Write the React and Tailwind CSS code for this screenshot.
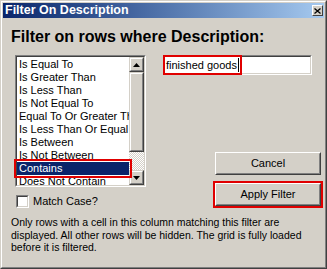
import { useState } from 'react';

const OPTIONS = [
  'Is Equal To',
  'Is Greater Than',
  'Is Less Than',
  'Is Not Equal To',
  'Equal To Or Greater Than',
  'Is Less Than Or Equal To',
  'Is Between',
  'Is Not Between',
  'Contains',
  'Does Not Contain',
];

function Arrow({ down }) {
  return (
    <svg width="7" height="4" viewBox="0 0 7 4">
      {down ? <polygon points="0,0 7,0 3.5,4" fill="#000" /> : <polygon points="0,4 7,4 3.5,0" fill="#000" />}
    </svg>
  );
}

function ScrollButton({ children, className = '' }) {
  return (
    <div className={`border border-t-[#d4d0c8] border-l-[#d4d0c8] border-r-[#404040] border-b-[#404040] ${className}`}>
      <div className="h-full border border-t-white border-l-white border-r-[#808080] border-b-[#808080] bg-[#d4d0c8] flex items-center justify-center">
        {children}
      </div>
    </div>
  );
}

function Button({ children, annotated }) {
  return (
    <button
      className={`w-[106px] h-[23px] border border-t-white border-l-white border-r-[#404040] border-b-[#404040] bg-[#d4d0c8] p-0 ${
        annotated ? 'outline-2 outline-[#e00000]' : ''
      }`}
    >
      <div className="h-full border border-t-[#d4d0c8] border-l-[#d4d0c8] border-r-[#808080] border-b-[#808080] flex items-center justify-center text-[11px]">
        {children}
      </div>
    </button>
  );
}

export default function App() {
  const [selected, setSelected] = useState('Contains');
  const [value] = useState('finished goods');
  const [matchCase, setMatchCase] = useState(false);

  return (
    <div className="w-[327px] h-[269px] bg-[#d4d0c8] border border-t-[#d4d0c8] border-l-[#d4d0c8] border-r-[#404040] border-b-[#404040] font-['Liberation_Sans',Arial,sans-serif] text-black select-none">
      <div className="h-full border border-t-white border-l-white border-r-[#808080] border-b-[#808080] p-px flex flex-col">
        {/* Title bar */}
        <div className="h-[15px] flex items-center bg-gradient-to-r from-[#0a246a] to-[#a6caf0] pl-[2px] pr-[1px]">
          <span className="text-white font-bold text-[12.5px] leading-none">Filter On Description</span>
          <div className="ml-auto w-[11px] h-[11px] border border-t-white border-l-white border-r-[#404040] border-b-[#404040] bg-[#d4d0c8] flex items-center justify-center">
            <svg width="7" height="6" viewBox="0 0 7 6">
              <path d="M0.5 0.5 L6.5 5.5 M6.5 0.5 L0.5 5.5" stroke="#000" strokeWidth="1.3" />
            </svg>
          </div>
        </div>

        {/* Heading */}
        <h1 className="mt-[10px] ml-[8px] text-[16px] leading-[18px] font-bold">
          Filter on rows where Description:
        </h1>

        <div className="flex items-start mt-[9px]">
          {/* Left column */}
          <div className="ml-[12px] w-[131px]">
            <div className="h-[132px] border border-t-[#808080] border-l-[#808080] border-r-white border-b-white">
              <div className="h-full border border-t-[#404040] border-l-[#404040] border-r-[#d4d0c8] border-b-[#d4d0c8] bg-white flex">
                <div className="flex-1 min-w-0 pt-px">
                  {OPTIONS.map((o) => {
                    const sel = o === selected;
                    return (
                      <div
                        key={o}
                        onClick={() => setSelected(o)}
                        className={`h-[13px] text-[11px] leading-[13px] pl-[2px] whitespace-nowrap ${
                          sel ? 'bg-[#0a246a] text-white outline-2 outline-offset-1 outline-[#e00000] relative' : ''
                        }`}
                      >
                        <span className="block overflow-hidden">{o}</span>
                      </div>
                    );
                  })}
                </div>
                {/* Scrollbar */}
                <div className="w-[15px] flex flex-col">
                  <ScrollButton className="h-[15px]">
                    <Arrow />
                  </ScrollButton>
                  <ScrollButton className="h-[80px]" />
                  <div className="flex-1 bg-[repeating-conic-gradient(#ffffff_0_25%,#d4d0c8_0_50%)] bg-[length:2px_2px]" />
                  <ScrollButton className="h-[15px]">
                    <Arrow down />
                  </ScrollButton>
                </div>
              </div>
            </div>

            <label className="flex items-center mt-[8px] ml-[1px] h-[13px]" onClick={() => setMatchCase(!matchCase)}>
              <span className="w-[13px] h-[13px] border border-t-[#808080] border-l-[#808080] border-r-white border-b-white">
                <span className="block w-full h-full border border-t-[#404040] border-l-[#404040] border-r-[#d4d0c8] border-b-[#d4d0c8] bg-white" />
              </span>
              <span className="ml-[4px] text-[11px]">Match Case?</span>
            </label>
          </div>

          {/* Right column */}
          <div className="ml-[17px] flex flex-col">
            <div className="w-[149px] h-[20px] border border-t-[#808080] border-l-[#808080] border-r-white border-b-white">
              <div className="h-full border border-t-[#404040] border-l-[#404040] border-r-[#d4d0c8] border-b-[#d4d0c8] bg-white flex items-center pl-[1px]">
                <span className="text-[11px] leading-[14px] outline-2 outline-offset-1 outline-[#e00000] pr-[1px] border-r border-black">
                  {value}
                </span>
              </div>
            </div>
            <div className="ml-[52px] mt-[77px] flex flex-col gap-[8px]">
              <Button>Cancel</Button>
              <Button annotated>Apply Filter</Button>
            </div>
          </div>
        </div>

        <p className="mt-[8px] ml-[8px] text-[10.5px] leading-[12.5px]">
          Only rows with a cell in this column matching this filter are
          <br />
          displayed. All other rows will be hidden. The grid is fully loaded
          <br />
          before it is filtered.
        </p>
      </div>
    </div>
  );
}
